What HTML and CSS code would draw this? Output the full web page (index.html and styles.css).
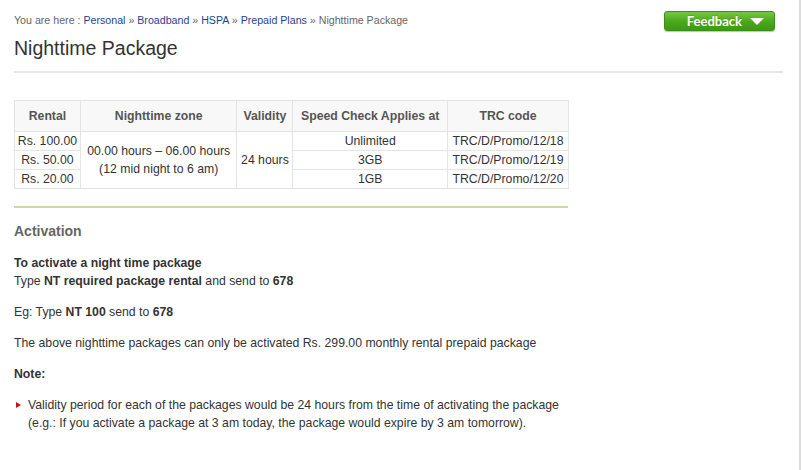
FILE: index.html
```html
<!DOCTYPE html>
<html>
<head>
<meta charset="utf-8">
<link rel="stylesheet" href="styles.css">
</head>
<body>
<div class="page">
  <div class="top">
    <div class="heading">
      <div class="crumbs">You are here : <a href="#">Personal</a> » <a href="#">Broadband</a> » <a href="#">HSPA</a> » <a href="#">Prepaid Plans</a> » Nighttime Package</div>
      <h1 class="title">Nighttime Package</h1>
    </div>
    <a class="feedback" href="#">Feedback <span class="tri"></span></a>
  </div>
  <div class="rule"></div>

  <div class="content">
    <table class="plans">
      <thead>
        <tr>
          <th class="c1">Rental</th>
          <th class="c2">Nighttime zone</th>
          <th class="c3">Validity</th>
          <th class="c4">Speed Check Applies at</th>
          <th class="c5">TRC code</th>
        </tr>
      </thead>
      <tbody>
        <tr>
          <td>Rs. 100.00</td>
          <td rowspan="3">00.00 hours – 06.00 hours<br>(12 mid night to 6 am)</td>
          <td rowspan="3">24 hours</td>
          <td>Unlimited</td>
          <td>TRC/D/Promo/12/18</td>
        </tr>
        <tr>
          <td>Rs. 50.00</td>
          <td>3GB</td>
          <td>TRC/D/Promo/12/19</td>
        </tr>
        <tr>
          <td>Rs. 20.00</td>
          <td>1GB</td>
          <td>TRC/D/Promo/12/20</td>
        </tr>
      </tbody>
    </table>
    <div class="green"></div>

    <h2 class="sub">Activation</h2>
    <p class="first"><b>To activate a night time package</b><br>Type <b>NT required package rental</b> and send to <b>678</b></p>
    <p>Eg: Type <b>NT 100</b> send to <b>678</b></p>
    <p>The above nighttime packages can only be activated Rs. 299.00 monthly rental prepaid package</p>
    <p><b>Note:</b></p>
    <ul class="notes">
      <li>Validity period for each of the packages would be 24 hours from the time of activating the package<br>(e.g.: If you activate a package at 3 am today, the package would expire by 3 am tomorrow).</li>
    </ul>
  </div>
</div>
</body>
</html>
```
FILE: styles.css
```css
html, body {
  margin: 0;
  padding: 0;
  background: #fff;
}
body {
  font-family: "Liberation Sans", Arial, sans-serif;
  color: #333;
  font-size: 12.25px;
}
.page {
  width: 769px;
  min-height: 470px;
  padding: 0 16px 0 14px;
  border-right: 2px solid #dcdcdc;
  box-sizing: content-box;
}
.top {
  display: flex;
  justify-content: space-between;
  align-items: flex-start;
}
.crumbs {
  padding-top: 13px;
  font-size: 10.65px;
  line-height: 14px;
  color: #666;
}
.crumbs a {
  color: #1f3f8f;
  text-decoration: none;
}
.title {
  margin: 9px 0 0;
  font-size: 19.5px;
  line-height: 24px;
  font-weight: normal;
  color: #333;
}
.feedback {
  margin-top: 11px;
  margin-right: 8px;
  height: 18px;
  border: 1px solid #3b8f16;
  border-radius: 3px;
  background: linear-gradient(#74c842, #4aa71c 55%, #3f9913);
  box-shadow: 0 1px 1px rgba(0,0,0,0.25);
  color: #fff;
  font-family: Lato, "Liberation Sans", sans-serif;
  font-weight: bold;
  font-size: 13px;
  line-height: 18px;
  text-decoration: none;
  display: flex;
  align-items: center;
  justify-content: flex-end;
  padding-right: 10px;
  box-sizing: content-box;
  width: 99px;
  gap: 8px;
  text-shadow: 0 -1px 0 rgba(0,0,0,0.15);
}
.tri {
  width: 0;
  height: 0;
  border-left: 7px solid transparent;
  border-right: 7px solid transparent;
  border-top: 7px solid #fff;
}
.rule {
  margin-top: 11px;
  height: 2px;
  background: #e6e6e6;
}
.content {
  width: 554px;
  padding-top: 27px;
}
.plans {
  width: 555px;
  border-collapse: collapse;
  font-size: 12.25px;
}
.plans th, .plans td {
  border: 1px solid #e4e4e4;
  text-align: center;
  vertical-align: middle;
  padding: 0 2px;
}
.plans th {
  height: 30px;
  background: #f8f8f8;
  color: #555;
  font-weight: bold;
}
.plans td {
  height: 17px;
  padding-top: 1px;
  line-height: 17px;
  color: #333;
}
.plans td[rowspan] {
  line-height: 18px;
  padding-top: 0;
}
.c1 { width: 61px; }
.c2 { width: 152px; }
.c3 { width: 51px; }
.c4 { width: 150px; }
.c5 { width: 116px; }
.green {
  margin-top: 17px;
  height: 2px;
  background: #c3dca6;
}
.sub {
  margin: 15px 0 0;
  font-size: 14px;
  line-height: 17px;
  color: #666;
  font-weight: bold;
}
p {
  margin: 13px 0 0;
  line-height: 18px;
}
p.first {
  margin-top: 14px;
}
.notes {
  margin: 13px 0 0;
  padding: 0;
  list-style: none;
}
.notes li {
  position: relative;
  padding-left: 14px;
  line-height: 18px;
}
.notes li::before {
  content: "";
  position: absolute;
  left: 2px;
  top: 6px;
  border-top: 3.5px solid transparent;
  border-bottom: 3.5px solid transparent;
  border-left: 5px solid #d01010;
}
```
